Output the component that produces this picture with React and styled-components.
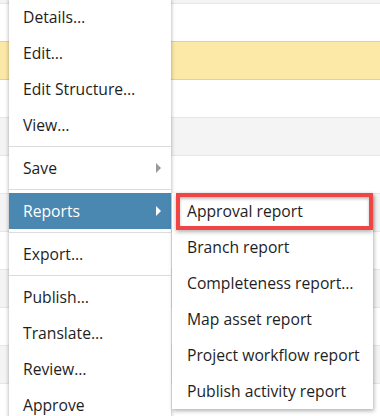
import React from 'react'
import styled, { createGlobalStyle } from 'styled-components'

const GlobalStyle = createGlobalStyle`
  html, body {
    margin: 0;
    padding: 0;
    background: #ffffff;
  }
  body {
    font-family: "Open Sans", "Liberation Sans", sans-serif;
  }
`

const Page = styled.div`
  position: relative;
  width: 380px;
  height: 416px;
  overflow: hidden;
  background: #ffffff;
`

const Table = styled.div`
  display: flex;
  flex-direction: column;
  margin-top: -34px;
`

const Row = styled.div`
  height: 37px;
  flex: none;
  border-bottom: 1px solid ${p => (p.$selected ? '#e8d37e' : '#e6e6e6')};
  background: ${p => (p.$selected ? '#fce9a7' : p.$striped ? '#f4f4f4' : '#ffffff')};
  box-shadow: ${p => (p.$selected ? '0 -1px 0 #e8d37e' : 'none')};
`

const Menu = styled.div`
  position: absolute;
  left: 9px;
  top: -1px;
  width: 162px;
  background: #ffffff;
  box-shadow: 0 0 4px rgba(0, 0, 0, 0.35);
  z-index: 2;
`

const SubMenu = styled.div`
  position: absolute;
  left: 172px;
  top: 193px;
  width: 201px;
  background: #ffffff;
  box-shadow: 1px 2px 4px rgba(0, 0, 0, 0.3);
  z-index: 3;
`

const Item = styled.div`
  position: relative;
  display: flex;
  align-items: center;
  height: 36px;
  padding: 0 10px 0 ${p => (p.$sub ? '15px' : '14px')};
  font-size: 15.7px;
  color: ${p => (p.$active ? '#ffffff' : '#1e1e1e')};
  background: ${p => (p.$active ? '#4a88b1' : 'transparent')};
  white-space: nowrap;

  ${p =>
    p.$marked &&
    `
    &::after {
      content: '';
      position: absolute;
      left: 4px;
      top: 0;
      right: 0;
      bottom: -1px;
      border: 4px solid #f04545;
      box-shadow: 0 2px 4px rgba(0, 0, 0, 0.3), inset 0 2px 3px rgba(0, 0, 0, 0.25);
    }
  `}
`

const Arrow = styled.span`
  margin-left: auto;
  width: 0;
  height: 0;
  border-top: 5px solid transparent;
  border-bottom: 5px solid transparent;
  border-left: 5px solid ${p => (p.$light ? '#ffffff' : '#9a9a9a')};
`

const Separator = styled.div`
  height: 1px;
  margin: 3px 0;
  background: #dcdcdc;
`

const rows = Array.from({ length: 12 }, (_, i) => i)

const reports = [
  'Approval report',
  'Branch report',
  'Completeness report…',
  'Map asset report',
  'Project workflow report',
  'Publish activity report',
]

const App = () => {
  return (
    <Page>
      <GlobalStyle />
      <Table>
        {rows.map(i => (
          <Row key={i} $selected={i === 2} $striped={i % 2 === 0} />
        ))}
      </Table>

      <Menu>
        <Item>Details…</Item>
        <Item>Edit…</Item>
        <Item>Edit Structure…</Item>
        <Item>View…</Item>
        <Separator />
        <Item>
          Save
          <Arrow />
        </Item>
        <Separator />
        <Item $active>
          Reports
          <Arrow $light />
        </Item>
        <Separator />
        <Item>Export…</Item>
        <Separator />
        <Item>Publish…</Item>
        <Item>Translate…</Item>
        <Item>Review…</Item>
        <Item>Approve</Item>
      </Menu>

      <SubMenu>
        {reports.map((r, i) => (
          <Item key={r} $sub $marked={i === 0}>
            {r}
          </Item>
        ))}
      </SubMenu>
    </Page>
  )
}

export default App
